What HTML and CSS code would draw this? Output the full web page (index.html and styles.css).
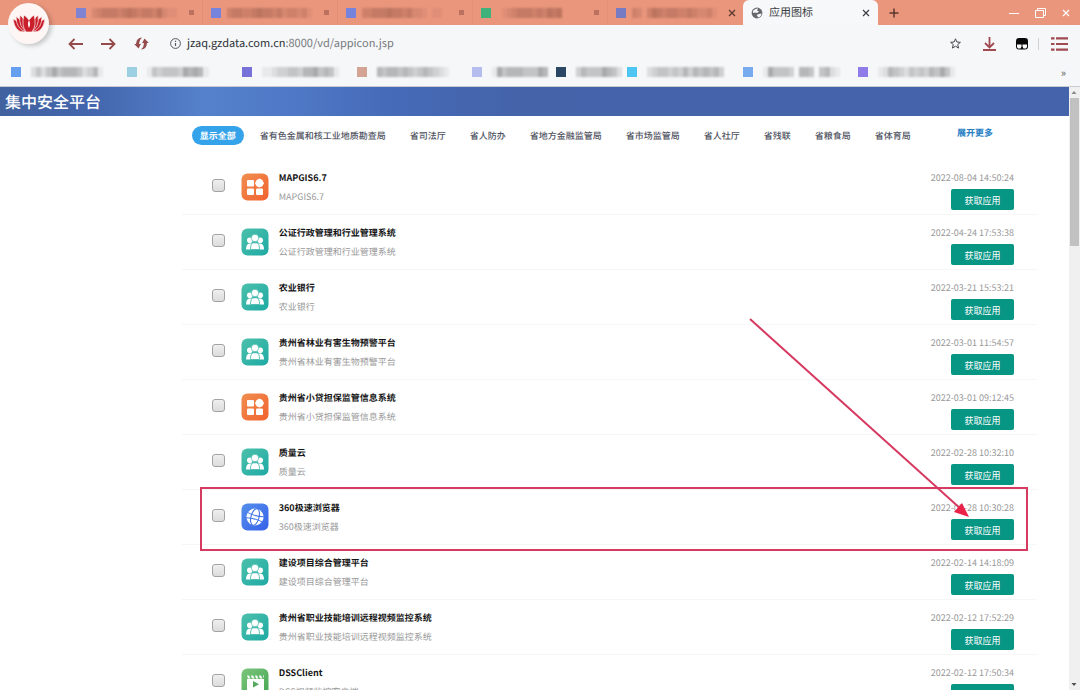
FILE: index.html
```html
<!DOCTYPE html>
<html lang="zh-CN">
<head>
<meta charset="utf-8">
<title>应用图标</title>
<link rel="stylesheet" href="styles.css">
</head>
<body>
<svg class="defs" width="0" height="0" aria-hidden="true">
  <defs>
    <linearGradient id="g-orange" x1="0" y1="0" x2="1" y2="1"><stop offset="0" stop-color="#f08f50"/><stop offset="1" stop-color="#f2622f"/></linearGradient>
    <linearGradient id="g-teal" x1="0" y1="0" x2="1" y2="1"><stop offset="0" stop-color="#4cc0ab"/><stop offset="1" stop-color="#1eaaa4"/></linearGradient>
    <linearGradient id="g-blue" x1="0" y1="0" x2="1" y2="1"><stop offset="0" stop-color="#5590ea"/><stop offset="1" stop-color="#3660ea"/></linearGradient>
    <linearGradient id="g-green" x1="0" y1="0" x2="1" y2="1"><stop offset="0" stop-color="#7cc67c"/><stop offset="1" stop-color="#45a653"/></linearGradient>
    <symbol id="i-grid" viewBox="0 0 28 28"><rect x=".5" y=".5" width="27" height="27" rx="6" fill="url(#g-orange)"/><g fill="#fff"><rect x="6" y="7" width="7" height="6.500" rx="1"/><rect x="6" y="15.500" width="7" height="6.500" rx="1"/><rect x="15" y="15.500" width="7" height="6.500" rx="1"/><path d="M18.500 5.500l2.800 1.500 1.700 3.300-1.700 2.900-2.800 1.300-2.900-1.300-1.600-2.900 1.600-3.300z"/></g></symbol>
    <symbol id="i-people" viewBox="0 0 28 28"><rect x=".5" y=".5" width="27" height="27" rx="6" fill="url(#g-teal)"/><g fill="#fff"><circle cx="8.800" cy="12.300" r="2.800"/><circle cx="19.200" cy="12.300" r="2.800"/><path d="M5 21.500q0-5.500 3.500-6h11q3.500.5 3.500 6z"/></g><path d="M9.500 21.500q0-6 2.500-6.700h4q2.500.7 2.500 6.700z" fill="#fff" stroke="#35b3a6" stroke-width=".8"/><circle cx="14" cy="10" r="3.700" fill="#fff" stroke="#35b3a6" stroke-width=".6"/></symbol>
    <symbol id="i-globe" viewBox="0 0 28 28"><rect x=".5" y=".5" width="27" height="27" rx="6" fill="url(#g-blue)"/><g transform="rotate(15 14 14)"><circle cx="14" cy="14" r="8.500" fill="#fff"/><g fill="none" stroke="#4276e8" stroke-width="1.100"><ellipse cx="14" cy="14" rx="4" ry="8.500"/><path d="M5.500 11.500q8.500 2 17 0M5.500 17q8.500-2 17 0"/></g></g></symbol>
    <symbol id="i-video" viewBox="0 0 28 28"><rect x=".5" y=".5" width="27" height="27" rx="6" fill="url(#g-green)"/><path d="M6 11h17v10q0 1.500-1.500 1.500h-14Q6 22.500 6 21z" fill="#fff"/><path d="M6 7.500h2l1.500 3H7zM10 7.500h2l1.500 3H11zM14 7.500h2l1.500 3H15zM18 7.500h2l1.500 3H19zM22 7.500h1v3z" fill="#fff"/><path d="M12 13v6.500l6-3.200z" fill="#56a95e"/></symbol>
    <symbol id="i-close" viewBox="0 0 8 8"><path d="M1 1l6 6M7 1L1 7" fill="none" stroke="currentColor" stroke-width="1.200"/></symbol>
  </defs>
</svg>

<div class="browser">
  <div class="logo" aria-hidden="true">
    <svg width="34" height="20" viewBox="0 0 34 20"><g fill="#c81f2b" stroke="#fdf3f2" stroke-width=".7"><path d="M1 5q7 2 12 13Q3 19 1 5zM33 5q-7 2-12 13Q31 19 33 5z"/><path d="M4 2.500q7 4 10 15.500Q4 15 4 2.500zM30 2.500q-7 4-10 15.500Q30 15 30 2.500z"/><path d="M8 1q5 4 8 17Q6 14 8 1zM26 1q-5 4-8 17Q28 14 26 1z"/><path d="M12 1q3 2 5 5 2-3 5-5 3 10-2 17h-6Q9 11 12 1z"/></g><path d="M17 6q2 4 0 8-2-4 0-8z" fill="#fff"/></svg>
  </div>
  <header class="tabstrip">
    <div class="tabs" id="tabs"></div>
    <div class="tab tab-active">
      <svg width="12" height="12" viewBox="0 0 12 12"><circle cx="6" cy="6" r="5.400" fill="#66696c"/><path d="M2 4q2-3 5-2.500L6 3.500l2 1L6 6 4 5.500 2 6zM5.500 8l2.500-1 2.500-.5q0 3-3.500 4l-.5-1.500z" fill="#f6f8f9"/></svg>
      <span class="tab-title">应用图标</span>
      <button class="icon-btn" aria-label="关闭标签页"><svg width="8" height="8"><use href="#i-close"/></svg></button>
    </div>
    <button class="icon-btn new-tab" aria-label="新建标签页"><svg width="10" height="10" viewBox="0 0 10 10"><path d="M5 .5v9M.5 5h9" stroke="#59372d" stroke-width="1.500"/></svg></button>
    <div class="window-controls">
      <button class="icon-btn" aria-label="最小化"><svg width="10" height="10" viewBox="0 0 10 10"><path d="M0 5.500h10" stroke="#fff"/></svg></button>
      <button class="icon-btn" aria-label="还原"><svg width="11" height="10" viewBox="0 0 11 10"><path d="M.5 2.500h8v7h-8zM2.500 2.500v-2h8v7h-2" fill="none" stroke="#fff"/></svg></button>
      <button class="icon-btn" aria-label="关闭"><svg width="8" height="8"><use href="#i-close"/></svg></button>
    </div>
  </header>

  <div class="toolbar">
    <button class="icon-btn" aria-label="后退"><svg width="15" height="12" viewBox="0 0 15 12"><path d="M15 6H1.500M6.500 1l-5 5 5 5" fill="none" stroke="#954b4c" stroke-width="1.800"/></svg></button>
    <button class="icon-btn" aria-label="前进"><svg width="15" height="12" viewBox="0 0 15 12"><path d="M0 6h13.500M8.500 1l5 5-5 5" fill="none" stroke="#954b4c" stroke-width="1.800"/></svg></button>
    <button class="icon-btn" aria-label="刷新"><svg width="15" height="13" viewBox="0 0 15 13"><path d="M8 .5Q2.500.5 2 7H.2l4.300 4.500L7 6.800 4.900 7Q5 3 8 .5zM7 12.500q5.500 0 6-6.500h1.800L10.500 1.500 8 6.200l2.100-.2Q10 10 7 12.500z" fill="#954b4c"/></svg></button>
    <div class="address">
      <svg width="11" height="11" viewBox="0 0 11 11"><circle cx="5.500" cy="5.500" r="4.900" fill="none" stroke="#55585b"/><path d="M5.500 5v3M5.500 2.800v1.200" stroke="#55585b" stroke-width="1.200"/></svg>
      <span class="url"><b>jzaq.gzdata.com.cn</b>:8000/vd/appicon.jsp</span>
    </div>
    <button class="icon-btn" aria-label="收藏"><svg width="11" height="11" viewBox="0 0 11 11"><path d="M5.500 .8l1.400 3.200 3.500.3-2.700 2.300.9 3.500-3.100-1.900-3.100 1.900.9-3.500L.6 4.300l3.500-.3z" fill="none" stroke="#45484b"/></svg></button>
    <button class="icon-btn download" aria-label="下载"><svg width="13" height="14" viewBox="0 0 13 14"><path d="M6.500 0v10M2 6l4.500 4.500L11 6M0 13h13" fill="none" stroke="#a04a52" stroke-width="1.800"/></svg></button>
    <button class="icon-btn" aria-label="扩展"><svg width="12" height="12" viewBox="0 0 12 12"><rect width="12" height="11.500" rx="3" fill="#090909"/><path d="M1 6.500h4.500v2l-1 2H2L1 9zM6.500 6.500H11V9l-1 1.500H7.500l-1-2z" fill="#fff"/></svg></button>
    <span class="divider"></span>
    <button class="icon-btn" aria-label="菜单"><svg width="17" height="14" viewBox="0 0 17 14"><path d="M0 1.300h3.500M5 1.300h12M0 7h3.500M5 7h12M0 12.700h3.500M5 12.700h12" stroke="#a04a52" stroke-width="2.200"/></svg></button>
  </div>

  <div class="bookmarks">
    <div class="bookmark-list" id="bookmarks"></div>
    <button class="icon-btn more" aria-label="更多书签">»</button>
  </div>

  <div class="viewport">
    <div class="page">
      <h1 class="banner">集中安全平台</h1>
      <main class="content">
        <nav class="filters">
          <a class="filter filter-on" href="#">显示全部</a>
          <a class="filter" href="#">省有色金属和核工业地质勘查局</a>
          <a class="filter" href="#">省司法厅</a>
          <a class="filter" href="#">省人防办</a>
          <a class="filter" href="#">省地方金融监管局</a>
          <a class="filter" href="#">省市场监管局</a>
          <a class="filter" href="#">省人社厅</a>
          <a class="filter" href="#">省残联</a>
          <a class="filter" href="#">省粮食局</a>
          <a class="filter" href="#">省体育局</a>
          <a class="expand" href="#">展开更多</a>
        </nav>
        <ul class="apps" id="apps"></ul>
      </main>
    </div>
    <div class="scrollbar" aria-hidden="true">
      <svg width="10" height="11" viewBox="0 0 10 11"><path d="M2.500 7L5 4l2.500 3z" fill="#8a8a8a"/></svg>
      <div class="thumb"></div>
      <svg class="down" width="10" height="11" viewBox="0 0 10 11"><path d="M2.500 4L5 7l2.500-3z" fill="#505050"/></svg>
    </div>
  </div>
</div>
<script src="app.js"></script>
</body>
</html>
```

FILE: styles.css
```css
* { box-sizing: border-box; }
body {
  margin: 0;
  background: #fff;
  font-family: "Noto Sans CJK SC", "Noto Sans", sans-serif;
  font-size: 9px;
  text-rendering: geometricPrecision;
}
svg { display: block; flex: none; }
.defs { position: absolute; }

.browser {
  position: relative;
  display: flex;
  flex-direction: column;
  height: 100vh;
  overflow: hidden;
  background: #f5f7f9;
}
.icon-btn {
  display: flex;
  flex: none;
  align-items: center;
  justify-content: center;
  padding: 0;
  border: 0;
  background: none;
  color: inherit;
  font: inherit;
}
.logo {
  position: absolute;
  top: 3px;
  left: 8px;
  display: flex;
  align-items: center;
  justify-content: center;
  width: 41px;
  height: 41px;
  border-radius: 50%;
  background: #fdf6f5;
  box-shadow: 3px 2px 4px #00000030;
}

.tabstrip {
  display: flex;
  align-items: stretch;
  height: 25px;
  padding-left: 68px;
  background: #ea967d;
  color: #59372d;
}
.tabs { display: flex; }
.tab {
  display: flex;
  align-items: center;
  gap: 6px;
  width: 135px;
  padding: 0 8px;
}
.tabs .tab { border-right: 1px solid #e48f75; }
.tabs .tab:last-child { border-right: 0; }
.tabs .mosaic { --ink: #8d5140; width: 90px; margin-right: auto; }
.tabs .closed-mark { width: 5px; height: 5px; background: #bb715d; }
.tab-active {
  border-radius: 6px 6px 0 0;
  background: #f6f8f9;
  color: #3c4043;
}
.tab-title { flex: 1; font-size: 11px; line-height: 15px; }
.new-tab { width: 32px; }
.window-controls {
  display: flex;
  gap: 16px;
  margin-left: auto;
  padding-right: 10px;
  color: #fff;
}

.mosaic { display: flex; flex: none; height: 10px; filter: blur(1px); }
.mosaic i { flex: 1; background: var(--ink); }
.favicon { flex: none; width: 10px; height: 10px; }

.toolbar {
  display: flex;
  align-items: center;
  gap: 18px;
  height: 37px;
  padding: 0 12px 0 68px;
}
.address {
  display: flex;
  flex: 1;
  align-items: center;
  gap: 6px;
  margin-left: 3px;
}
.url { color: #76797c; font-size: 11px; line-height: 15px; }
.url b { color: #2c2f32; font-weight: 400; }
.download { margin: 0 2px 0 4px; }
.divider { width: 1px; height: 12px; margin: 0 -6px 0 -8px; background: #cfd1d3; }

.bookmarks {
  display: flex;
  align-items: center;
  height: 25px;
  padding: 0 14px 4px 11px;
  border-bottom: 1px solid #c9cbd0;
}
.bookmark-list { display: flex; flex: 1; }
.bookmark { display: flex; gap: 10px; }
.bookmark .mosaic { --ink: #777; width: 82px; }
.more { color: #55585b; font-size: 11px; line-height: 10px; }

.viewport { display: flex; flex: 1; min-height: 0; background: #fff; }
.page { flex: 1; overflow: hidden; }
.banner {
  margin: 0;
  padding: 0 5px 1px;
  background: linear-gradient(90deg, #41629f 0, #4265ac 8%, #5580cb 19%, #4f79c6 27%, #466bb9 36%, #4463a9 48%, #4463aa 100%);
  color: #fff;
  font-size: 16px;
  font-weight: 500;
  line-height: 28px;
}
.content { padding: 0 3% 0 17%; }
.filters {
  display: flex;
  align-items: center;
  gap: 8px;
  padding: 10px 0 15px 10px;
  white-space: nowrap;
}
.filter {
  padding: 0 8px;
  border-radius: 10px;
  color: #50535f;
  font-weight: 500;
  line-height: 19px;
  text-decoration: none;
}
.filter-on { background: #35a3ea; color: #fff; font-weight: 700; }
.expand {
  margin: 0 44px 5px auto;
  color: #287fc4;
  font-weight: 700;
  line-height: 14px;
  text-decoration: none;
}

.apps { margin: 0; padding: 0; list-style: none; }
.app {
  position: relative;
  display: flex;
  align-items: flex-start;
  height: 55px;
  padding: 11px 23px 0 30px;
  border-bottom: 1px solid #f6f6f6;
}
.check {
  appearance: none;
  width: 13px;
  height: 13px;
  margin: 8px 16px 0 0;
  border: 1px solid #a3a3a3;
  border-radius: 3px;
  background: linear-gradient(#efefef, #dcdcdc);
}
.app-icon { margin-top: 2px; }
.app-text { flex: 1; margin-left: 10px; line-height: 14px; }
.app-name { display: block; color: #151515; font-weight: 700; }
.app-desc { margin: 5px 0 0; color: #999; }
.app-side { display: flex; flex-direction: column; align-items: flex-end; gap: 4px; }
.app-time { color: #999; line-height: 14px; }
.get {
  width: 63px;
  height: 21px;
  padding: 1px 0 0;
  border: 0;
  border-radius: 2px;
  background: #079584;
  color: #fff;
  font: inherit;
}

.outline {
  position: absolute;
  inset: -3px 9px -7px 18px;
  z-index: 1;
  border: 2px solid #d63a60;
  pointer-events: none;
}
.arrow { position: absolute; right: 67px; bottom: 25px; z-index: 1; pointer-events: none; }

.scrollbar {
  display: flex;
  flex-direction: column;
  width: 11px;
  background: #f0f0f0;
}
.thumb { height: 148px; margin: 0 1px; background: #c1c1c1; }
.down { margin-top: auto; }
```

FILE: app.js
```js
// Each digit is the density of one cell of an obscured label.
function mosaic(levels) {
  return '<span class="mosaic">' + [...levels].map(function (n) {
    return '<i style="opacity:' + n / 10 + '"></i>';
  }).join('') + '</span>';
}

const tabs = [
  ['#7f83d2', '234443454344352110'],
  ['#7583dc', '344334544342332310'],
  ['#7583dc', '334445443422101100'],
  ['#3fb27c', '012344434354500000'],
  ['#777bc4', '320354344334322310']
];
document.getElementById('tabs').innerHTML = tabs.map(function (t, i) {
  const close = i === tabs.length - 1
    ? '<button class="icon-btn" aria-label="关闭标签页"><svg width="8" height="8"><use href="#i-close"/></svg></button>'
    : '<span class="closed-mark"></span>';
  return '<div class="tab"><span class="favicon" style="background:' + t[0] + '"></span>' + mosaic(t[1]) + close + '</div>';
}).join('');

const bookmarks = [
  ['#669ef0', '2424645554235100', 116],
  ['#9ccfe2', '1434443656510000', 115],
  ['#7771d8', '1123344355645410', 115],
  ['#d3a394', '5455454345432100', 115],
  ['#b4bdee', '1645554446500000', 84],
  ['#2b4766', '3544465420000000', 71],
  ['#4cc5f2', '2344343535454530', 116],
  ['#78aaf0', '1644430554045210', 115],
  ['#8f7ce8', '1254324343546410', 115]
];
document.getElementById('bookmarks').innerHTML = bookmarks.map(function (b) {
  return '<div class="bookmark" style="width:' + b[2] + 'px"><span class="favicon" style="background:' + b[0] + '"></span>' + mosaic(b[1]) + '</div>';
}).join('');

const apps = [
  ['grid', 'MAPGIS6.7', '2022-08-04 14:50:24'],
  ['people', '公证行政管理和行业管理系统', '2022-04-24 17:53:38'],
  ['people', '农业银行', '2022-03-21 15:53:21'],
  ['people', '贵州省林业有害生物预警平台', '2022-03-01 11:54:57'],
  ['grid', '贵州省小贷担保监管信息系统', '2022-03-01 09:12:45'],
  ['people', '质量云', '2022-02-28 10:32:10'],
  ['globe', '360极速浏览器', '2022-02-28 10:30:28'],
  ['people', '建设项目综合管理平台', '2022-02-14 14:18:09'],
  ['people', '贵州省职业技能培训远程视频监控系统', '2022-02-12 17:52:29'],
  ['video', 'DSSClient', '2022-02-12 17:50:34', 'DSS视频监控客户端']
];
const marker = '<span class="outline"></span>' +
  '<svg class="arrow" width="222" height="202" viewBox="0 0 222 202"><path d="M2 2l212 191" stroke="#d63a60" stroke-width="2"/><path d="M221 200l-15-5 8-9z" fill="#ea2148"/></svg>';
document.getElementById('apps').innerHTML = apps.map(function (a, i) {
  return '<li class="app"><input class="check" type="checkbox" id="app' + i + '">' +
    '<svg class="app-icon" width="28" height="28"><use href="#i-' + a[0] + '"/></svg>' +
    '<div class="app-text"><label class="app-name" for="app' + i + '">' + a[1] + '</label><p class="app-desc">' + (a[3] || a[1]) + '</p></div>' +
    '<div class="app-side"><time class="app-time">' + a[2] + '</time><button class="get">获取应用</button></div>' +
    (a[0] === 'globe' ? marker : '') + '</li>';
}).join('');
```
